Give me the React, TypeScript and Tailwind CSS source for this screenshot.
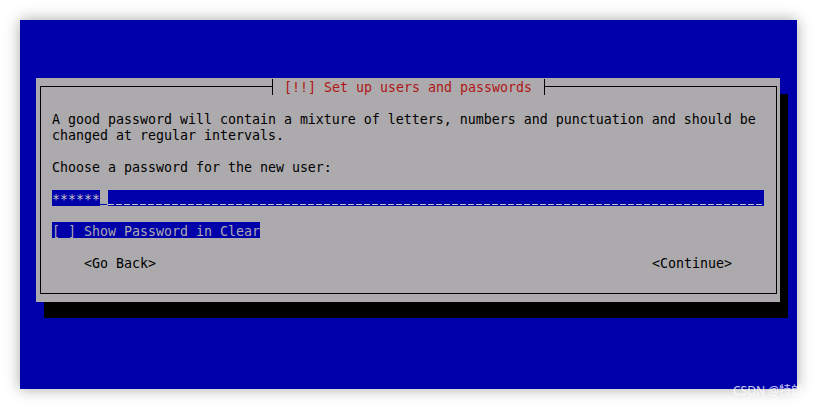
import React from "react";

const mono = { fontFamily: '"DejaVu Sans Mono", "Liberation Mono", monospace' };

export default function App() {
  return (
    <div className="relative w-[817px] h-[409px] bg-white p-5 overflow-hidden" style={mono}>
      <div className="w-[777px] h-[369px] bg-[#0000aa] shadow-[0_0_14px_rgba(0,0,0,0.35)] pt-[58px] pl-4">
        <div className="w-[744px] h-[224px] bg-[#acaaac] shadow-[8px_16px_0_0_#000] pt-2 pb-2 pl-1 pr-[3px] text-[13.29px] leading-[19px] text-black">
          <div className="relative h-[208px] border border-black pt-[23px] pl-[11px]">
            <div className="absolute -top-[8px] left-[231px] h-4 border-l border-r border-black bg-[#acaaac] pl-[11px] pr-[12px] text-[#b01414] whitespace-pre leading-[18px]">
              [!!] Set up users and passwords
            </div>
            <div className="whitespace-pre h-4">A good password will contain a mixture of letters, numbers and punctuation and should be</div>
            <div className="whitespace-pre h-4">changed at regular intervals.</div>
            <div className="h-4" />
            <div className="whitespace-pre h-4">Choose a password for the new user:</div>
            <div className="h-4" />
            <div className="flex h-4 w-[712px] whitespace-pre">
              <span className="h-4 bg-[#0000aa] text-[#c4c2c4]">******</span>
              <span className="h-4 w-2 flex flex-col justify-end pb-[1px]">
                <span className="h-px w-[7px] bg-[#0000aa]" />
              </span>
              <span className="h-4 bg-[#0000aa] flex-1 flex flex-col justify-end pb-[1px]">
                <span className="h-px w-full bg-[repeating-linear-gradient(90deg,#c4c2c4_0px,#c4c2c4_6px,transparent_6px,transparent_8px)]" />
              </span>
            </div>
            <div className="h-4" />
            <div className="flex h-4">
              <span className="h-4 bg-[#0000aa] text-[#acaaac] whitespace-pre">[ ] Show Password in Clear</span>
            </div>
            <div className="h-4" />
            <div className="flex h-4 w-[712px] justify-between pl-8 pr-8 whitespace-pre">
              <span>&lt;Go Back&gt;</span>
              <span>&lt;Continue&gt;</span>
            </div>
          </div>
        </div>
      </div>
      <div
        className="absolute left-[733px] top-[383px] text-[12px] leading-4 text-white/80"
        style={{ fontFamily: '"Noto Sans", "Noto Sans CJK SC", sans-serif' }}
      >
        CSDN @特朗
      </div>
    </div>
  );
}
